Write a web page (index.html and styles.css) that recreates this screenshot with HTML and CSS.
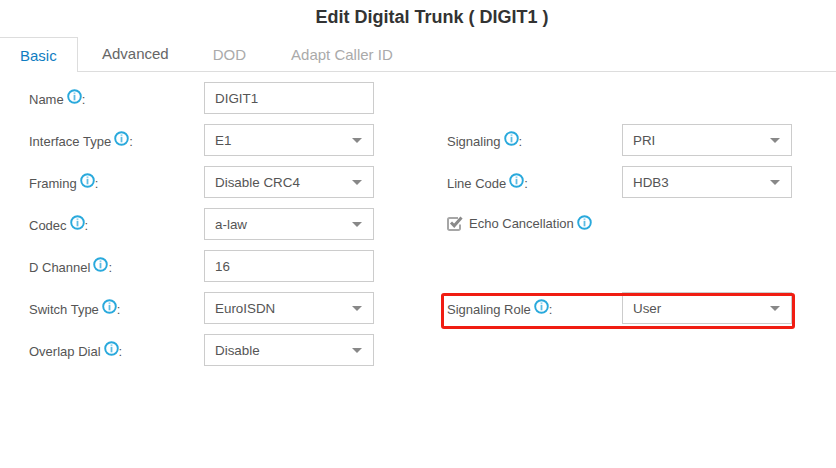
FILE: index.html
```html
<!DOCTYPE html>
<html lang="en">
<head>
    <meta charset="UTF-8">
    <title>Edit Digital Trunk</title>
    <link rel="stylesheet" href="styles.css">
</head>
<body>
    <svg class="icon-defs" width="0" height="0">
        <symbol id="info" viewBox="0 0 15 15">
            <circle cx="7.5" cy="7.5" r="6.3" fill="none" stroke="#29a9dc" stroke-width="1.9"/>
            <rect x="6.6" y="3.4" width="1.8" height="1.7" fill="#8fd0ec"/>
            <rect x="6.6" y="5.9" width="1.8" height="5.4" fill="#5dbce3"/>
        </symbol>
    </svg>

    <h1 class="title">Edit Digital Trunk ( DIGIT1 )</h1>

    <div class="tabs">
        <a class="tab active">Basic</a>
        <a class="tab raised">Advanced</a>
        <a class="tab muted">DOD</a>
        <a class="tab muted">Adapt Caller ID</a>
    </div>

    <form class="form-grid">
        <div class="field">
            <label class="field-label">Name<svg class="info"><use href="#info"/></svg>:</label>
            <div class="control">DIGIT1</div>
        </div>
        <div></div>

        <div class="field">
            <label class="field-label">Interface Type<svg class="info"><use href="#info"/></svg>:</label>
            <div class="control select">E1</div>
        </div>
        <div class="field">
            <label class="field-label">Signaling<svg class="info"><use href="#info"/></svg>:</label>
            <div class="control select">PRI</div>
        </div>

        <div class="field">
            <label class="field-label">Framing<svg class="info"><use href="#info"/></svg>:</label>
            <div class="control select">Disable CRC4</div>
        </div>
        <div class="field">
            <label class="field-label">Line Code<svg class="info"><use href="#info"/></svg>:</label>
            <div class="control select">HDB3</div>
        </div>

        <div class="field">
            <label class="field-label">Codec<svg class="info"><use href="#info"/></svg>:</label>
            <div class="control select">a-law</div>
        </div>
        <div class="field">
            <label class="check-label">
                <svg class="check" viewBox="0 0 16 15">
                    <path d="M13 8.500V12.500a1.500 1.500 0 0 1-1.500 1.500H2.500A1.500 1.500 0 0 1 1 12.500V3.500A1.500 1.500 0 0 1 2.500 2H11" fill="none" stroke="#a6a6a6" stroke-width="2"/>
                    <path d="M4 6.500l3.200 3.200L14.500 1.500" fill="none" stroke="#8a8a8a" stroke-width="3"/>
                </svg>
                Echo Cancellation<svg class="info"><use href="#info"/></svg>
            </label>
        </div>

        <div class="field">
            <label class="field-label">D Channel<svg class="info"><use href="#info"/></svg>:</label>
            <div class="control">16</div>
        </div>
        <div></div>

        <div class="field">
            <label class="field-label">Switch Type<svg class="info"><use href="#info"/></svg>:</label>
            <div class="control select">EuroISDN</div>
        </div>
        <div class="field highlighted">
            <label class="field-label">Signaling Role<svg class="info"><use href="#info"/></svg>:</label>
            <div class="control select">User</div>
        </div>

        <div class="field">
            <label class="field-label">Overlap Dial<svg class="info"><use href="#info"/></svg>:</label>
            <div class="control select">Disable</div>
        </div>
        <div></div>
    </form>
</body>
</html>
```

FILE: styles.css
```css
* {
    margin: 0;
    padding: 0;
    box-sizing: border-box;
    font-family: "Liberation Sans", Arial, sans-serif;
}

body {
    width: 836px;
    height: 468px;
    background: #fff;
    color: #555;
    overflow: hidden;
}

.icon-defs {
    display: block;
}

.title {
    height: 37px;
    padding: 7px 0 0 28px;
    text-align: center;
    font-size: 18px;
    line-height: 20px;
    font-weight: 700;
    color: #333;
}

.tabs {
    display: flex;
    height: 35px;
    border-bottom: 1px solid #ddd;
}

.tab {
    padding: 8px 0 0;
    font-size: 15px;
    line-height: 20px;
    margin-left: 45px;
}

.tab.active {
    width: 78px;
    height: 35px;
    margin-left: 0;
    padding-left: 20px;
    color: #0f7dc2;
    background: #fff;
    border: 1px solid #ddd;
    border-width: 1px 1px 0 0;
}

.tab.raised {
    margin-left: 24px;
    padding-top: 7px;
    color: #666;
}

.tab.muted {
    color: #aaa;
}

.tab.raised + .muted {
    margin-left: 44px;
}

.form-grid {
    display: grid;
    grid-template-columns: 418px 345px;
    grid-auto-rows: 32px;
    row-gap: 10px;
    padding: 10px 0 0 29px;
}

.field {
    display: flex;
    align-items: center;
    position: relative;
}

.field-label {
    display: block;
    width: 175px;
    font-size: 13px;
    line-height: 20px;
    padding-top: 2px;
    white-space: nowrap;
}

.info {
    width: 15px;
    height: 15px;
    margin-left: 3px;
    vertical-align: 0;
}

.control {
    width: 170px;
    height: 32px;
    padding: 1px 10px 0;
    font-size: 13.4px;
    line-height: 30px;
    border: 1px solid #ccc;
    position: relative;
}

.select::after {
    content: "";
    position: absolute;
    right: 11px;
    top: 13px;
    border-left: 5px solid transparent;
    border-right: 5px solid transparent;
    border-top: 5px solid #888;
}

.check-label {
    display: flex;
    align-items: center;
    font-size: 13px;
    line-height: 20px;
}

.check {
    width: 16px;
    height: 15px;
    margin: -2px 6px 0 0;
}

.check-label .info {
    margin-top: -3px;
}

.highlighted::after {
    content: "";
    position: absolute;
    top: 1px;
    left: -6px;
    right: -3px;
    bottom: -5px;
    border: 3px solid #f01d12;
    border-radius: 3px;
}
```
